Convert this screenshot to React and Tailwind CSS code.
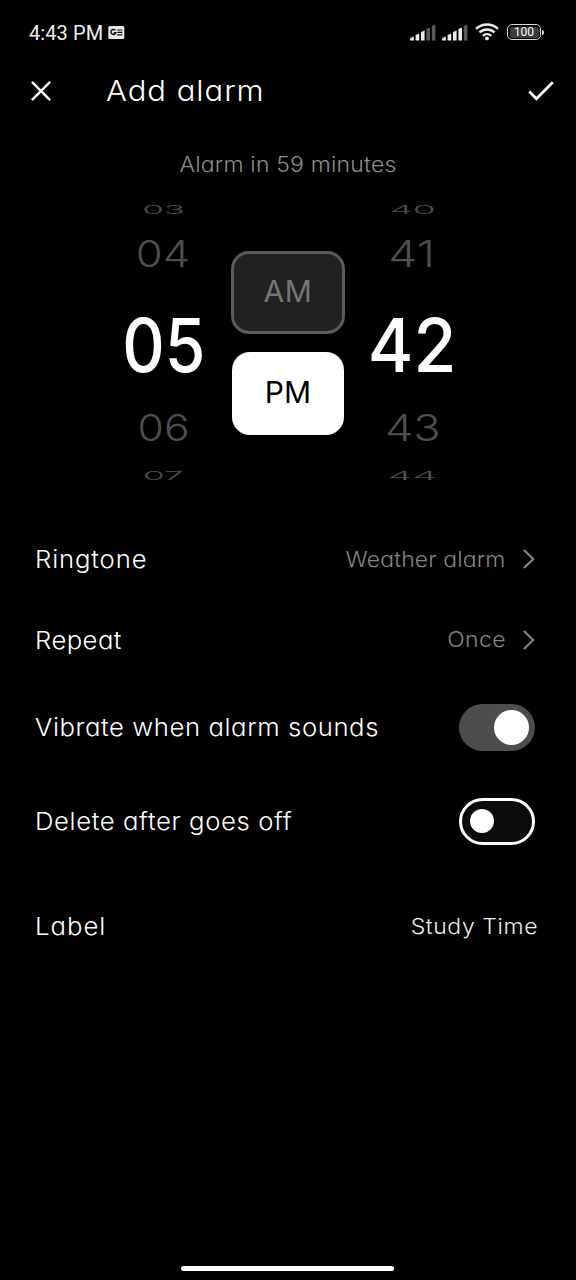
function StatusBar() {
  return (
    <div className="flex h-11 items-end justify-between pr-8 pl-[29px]">
      <div className="flex items-center gap-[5px] text-[#ededed]">
        <span className="font-[Roboto,sans-serif] text-[20px] leading-[22px] font-normal tracking-[0.1px]">4:43 PM</span>
        <svg width="17" height="14" viewBox="0 0 17 14">
          <rect x="0.3" y="0" width="16" height="13" rx="1.6" fill="#e8e8e8" />
          <path d="M7.4 4.4A2.5 2.5 0 1 0 7.8 6.8H5.6" fill="none" stroke="#111" strokeWidth="1.4" />
          <path d="M9.2 4H14.4M9.2 6.4H14.4M9.2 8.8H14.4" stroke="#111" strokeWidth="1.2" />
        </svg>
      </div>
      <div className="flex items-center pb-[3px]">
        <Signal bright={3} />
        <Signal bright={4} />
        <svg className="ml-[1px]" width="24" height="18" viewBox="0 0 25 18" fill="none" stroke="#ececec" strokeWidth="2.5">
          <path d="M1 5.8C7.4 -0.3 17.6 -0.3 24 5.8" />
          <path d="M4.6 9.5C9 5.3 16 5.3 20.4 9.5" />
          <path d="M8.2 13C10.7 10.6 14.3 10.6 16.8 13" />
          <circle cx="12.5" cy="15.7" r="2" fill="#ececec" stroke="none" />
        </svg>
        <div className="ml-2 flex h-4 w-[34px] items-center justify-center rounded-[5px] border-[1.5px] border-[#d8d8d8] p-[1.5px]">
          <div className="flex h-full w-full items-center justify-center rounded-[2.5px] bg-[#3c3c3c] font-[Roboto,sans-serif] text-[12px] leading-none text-white">
            100
          </div>
        </div>
        <div className="ml-px h-[5px] w-[2px] rounded-r-sm bg-[#d8d8d8]" />
      </div>
    </div>
  );
}

function Signal({ bright }) {
  const heights = [4, 7, 10, 13, 16];
  return (
    <svg className="mr-[6px]" width="26" height="17" viewBox="0 0 26 17">
      {heights.map((h, i) => (
        <path
          key={h}
          d={`M${i * 5.4 + 0.2} 16.6V${18 - h}L${i * 5.4 + 3.8} ${16.4 - h}V16.6Z`}
          fill={i < bright ? "#ececec" : "#5a5a5a"}
        />
      ))}
    </svg>
  );
}

function Wheel({ rows }) {
  return (
    <div className="grid grid-rows-[18px_71px_112px_52px_44px] place-items-center text-[37px] leading-none font-light text-[#4e4e4e]">
      {rows.map(([text, look]) => (
        <span key={text} className={look}>
          {text}
        </span>
      ))}
    </div>
  );
}

const hours = [
  ["03", "[transform:scale(0.95,0.31)]"],
  ["04", "[transform:scale(1.18,1)]"],
  ["05", "text-[74px] font-medium text-white [transform:scale(0.89,1)]"],
  ["06", "[transform:scale(1.15,1)]"],
  ["07", "[transform:scale(0.95,0.31)]"],
];

const minutes = [
  ["40", "[transform:scale(1,0.31)]"],
  ["41", "[transform:translateX(-1px)_scale(1.25,1)]"],
  ["42", "text-[74px] font-medium text-white [transform:scale(0.94,1)]"],
  ["43", "[transform:scale(1.22,1)]"],
  ["44", "[transform:scale(1.08,0.31)]"],
];

function Row({ height, label, spacing, children }) {
  return (
    <div className={`flex items-center justify-between pr-[41px] pl-[35px] ${height}`}>
      <span className={`origin-left pt-[2px] text-[24px] font-light whitespace-nowrap [transform:scaleX(1.07)] ${spacing}`}>
        {label}
      </span>
      {children}
    </div>
  );
}

function Chevron() {
  return (
    <svg width="12" height="20" viewBox="0 0 12 20" fill="none" stroke="#808080" strokeWidth="2.2">
      <path d="M1 1L10.2 10L1 19" />
    </svg>
  );
}

export default function App() {
  return (
    <div className="flex h-[1280px] w-[576px] flex-col overflow-hidden bg-black font-[Inter,sans-serif] text-white [font-feature-settings:'cv11']">
      <StatusBar />
      <header className="flex h-[94px] items-center pr-[22px] pl-[31px]">
        <svg width="20" height="20" viewBox="0 0 20 20" fill="none" stroke="#fff" strokeWidth="2.4">
          <path d="M0.9 0.9L19.1 19.1M19.1 0.9L0.9 19.1" />
        </svg>
        <h1 className="ml-[55px] flex-1 origin-left text-[29px] font-light tracking-[0.9px] [transform:scaleX(1.07)]">
          Add alarm
        </h1>
        <svg width="26" height="20" viewBox="0 0 26 20" fill="none" stroke="#fff" strokeWidth="2.8">
          <path d="M1.3 10.6L8.4 17.8L24.8 1.3" />
        </svg>
      </header>
      <p className="flex h-[52px] items-center justify-center text-[21.5px] font-light tracking-[0.17px] text-[#8c8c8c] [transform:scaleX(1.07)]">
        Alarm in 59 minutes
      </p>
      <div className="mt-[10px] grid h-[297px] grid-cols-[135px_114px_135px] justify-center">
        <Wheel rows={hours} />
        <div className="flex flex-col gap-[18px] pt-[50.5px] text-[30px]">
          <div className="flex h-[83px] items-center justify-center rounded-[18px] border-[3px] border-[#5c5c5c] bg-[#212121] pb-[2px] tracking-[0.6px] text-[#757575]">
            AM
          </div>
          <div className="mx-[1px] flex h-[83.5px] items-center justify-center rounded-[18px] bg-white pb-[2px] text-black">
            PM
          </div>
        </div>
        <Wheel rows={minutes} />
      </div>
      <main className="mt-[22px] flex flex-col">
        <Row height="h-20" label="Ringtone" spacing="tracking-[0.8px]">
          <div className="flex items-center gap-[17px] text-[21.5px] font-light text-[#858585]">
            <span className="origin-right tracking-[0.12px] [transform:scaleX(1.07)]">Weather alarm</span>
            <Chevron />
          </div>
        </Row>
        <Row height="h-[81px]" label="Repeat" spacing="tracking-[0.4px]">
          <div className="flex items-center gap-[17px] text-[21.5px] font-light text-[#858585]">
            <span className="origin-right tracking-[0.4px] [transform:scaleX(1.07)]">Once</span>
            <Chevron />
          </div>
        </Row>
        <Row height="h-[94px]" label="Vibrate when alarm sounds" spacing="tracking-[0.55px]">
          <div className="flex h-[47px] w-[76px] items-center justify-end rounded-full bg-[#4d4d4d] pr-[6px]">
            <div className="size-[35px] rounded-full bg-white" />
          </div>
        </Row>
        <Row height="h-[94px]" label="Delete after goes off" spacing="tracking-[0.56px]">
          <div className="flex h-[47px] w-[76px] items-center rounded-full border-[3px] border-white bg-[#0b0b0b] pl-[8px]">
            <div className="size-6 rounded-full bg-white" />
          </div>
        </Row>
        <Row height="h-[116px]" label="Label" spacing="tracking-[0.95px]">
          <span className="-mr-[3px] origin-right text-[21.5px] font-light tracking-[0.55px] text-[#ededed] [transform:scaleX(1.07)]">
            Study Time
          </span>
        </Row>
      </main>
      <div className="mt-auto mb-[9px] ml-[181px] h-[5px] w-[213px] rounded-full bg-white" />
    </div>
  );
}
